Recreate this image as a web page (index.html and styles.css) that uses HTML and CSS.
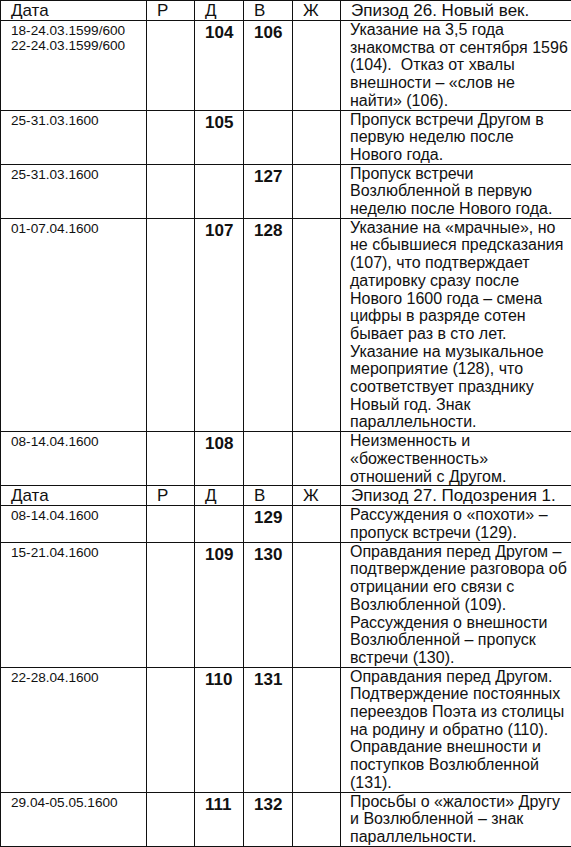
FILE: index.html
```html
<!DOCTYPE html>
<html lang="ru">
<head>
<meta charset="utf-8">
<title>Эпизоды</title>
<link rel="stylesheet" href="styles.css">
</head>
<body>
<table class="tbl">
  <colgroup>
    <col class="c-date"><col class="c-r"><col class="c-d"><col class="c-v"><col class="c-zh"><col class="c-desc">
  </colgroup>
  <tbody>
    <tr class="head">
      <td>Дата</td><td>Р</td><td>Д</td><td>В</td><td>Ж</td><td>Эпизод 26. Новый век.</td>
    </tr>
    <tr>
      <td class="date">18-24.03.1599/600<br>22-24.03.1599/600</td>
      <td class="num"></td><td class="num">104</td><td class="num">106</td><td class="num"></td>
      <td class="desc">Указание на 3,5 года знакомства от сентября 1596 (104).&nbsp; Отказ от хвалы внешности – «слов не найти» (106).</td>
    </tr>
    <tr>
      <td class="date">25-31.03.1600</td>
      <td class="num"></td><td class="num">105</td><td class="num"></td><td class="num"></td>
      <td class="desc">Пропуск встречи Другом в первую неделю после Нового года.</td>
    </tr>
    <tr>
      <td class="date">25-31.03.1600</td>
      <td class="num"></td><td class="num"></td><td class="num">127</td><td class="num"></td>
      <td class="desc">Пропуск встречи Возлюбленной в первую неделю после Нового года.</td>
    </tr>
    <tr>
      <td class="date">01-07.04.1600</td>
      <td class="num"></td><td class="num">107</td><td class="num">128</td><td class="num"></td>
      <td class="desc">Указание на «мрачные», но не сбывшиеся предсказания (107), что подтверждает датировку сразу после Нового 1600 года – смена цифры в разряде сотен бывает раз в сто лет. Указание на музыкальное мероприятие (128), что соответствует празднику Новый год. Знак параллельности.</td>
    </tr>
    <tr>
      <td class="date">08-14.04.1600</td>
      <td class="num"></td><td class="num">108</td><td class="num"></td><td class="num"></td>
      <td class="desc">Неизменность и «божественность» отношений с Другом.</td>
    </tr>
    <tr class="head">
      <td>Дата</td><td>Р</td><td>Д</td><td>В</td><td>Ж</td><td>Эпизод 27. Подозрения 1.</td>
    </tr>
    <tr>
      <td class="date">08-14.04.1600</td>
      <td class="num"></td><td class="num"></td><td class="num">129</td><td class="num"></td>
      <td class="desc">Рассуждения о «похоти» – пропуск встречи (129).</td>
    </tr>
    <tr>
      <td class="date">15-21.04.1600</td>
      <td class="num"></td><td class="num">109</td><td class="num">130</td><td class="num"></td>
      <td class="desc">Оправдания перед Другом – подтверждение разговора об отрицании его связи с Возлюбленной (109). Рассуждения о внешности Возлюбленной – пропуск встречи (130).</td>
    </tr>
    <tr>
      <td class="date">22-28.04.1600</td>
      <td class="num"></td><td class="num">110</td><td class="num">131</td><td class="num"></td>
      <td class="desc">Оправдания перед Другом. Подтверждение постоянных переездов Поэта из столицы на родину и обратно (110). Оправдание внешности и поступков Возлюбленной (131).</td>
    </tr>
    <tr>
      <td class="date">29.04-05.05.1600</td>
      <td class="num"></td><td class="num">111</td><td class="num">132</td><td class="num"></td>
      <td class="desc">Просьбы о «жалости» Другу и Возлюбленной – знак параллельности.</td>
    </tr>
  </tbody>
</table>
</body>
</html>
```

FILE: styles.css
```css
html, body {
  margin: 0;
  padding: 0;
  background: #fff;
}
body {
  font-family: "Liberation Sans", Arial, sans-serif;
  color: #111;
}
.tbl {
  border-collapse: collapse;
  table-layout: fixed;
  width: 571px;
}
.c-date { width: 146px; }
.c-r { width: 48px; }
.c-d { width: 49px; }
.c-v { width: 49px; }
.c-zh { width: 48px; }
.c-desc { width: 231px; }
.tbl td {
  border: 1px solid #111;
  vertical-align: top;
  padding: 0 3px 0 10px;
  overflow: hidden;
}
.head td {
  font-size: 17px;
  line-height: 19px;
  padding-top: 0;
  padding-bottom: 0;
}
.date {
  font-size: 13.6px;
  line-height: 14.5px;
  padding-top: 3px !important;
}
.num {
  font-size: 17px;
  font-weight: bold;
  line-height: 19px;
  padding-top: 2px !important;
}
.tbl td.desc {
  font-size: 16px;
  line-height: 17.7px;
  padding-left: 9px;
  padding-right: 2px;
}
```
